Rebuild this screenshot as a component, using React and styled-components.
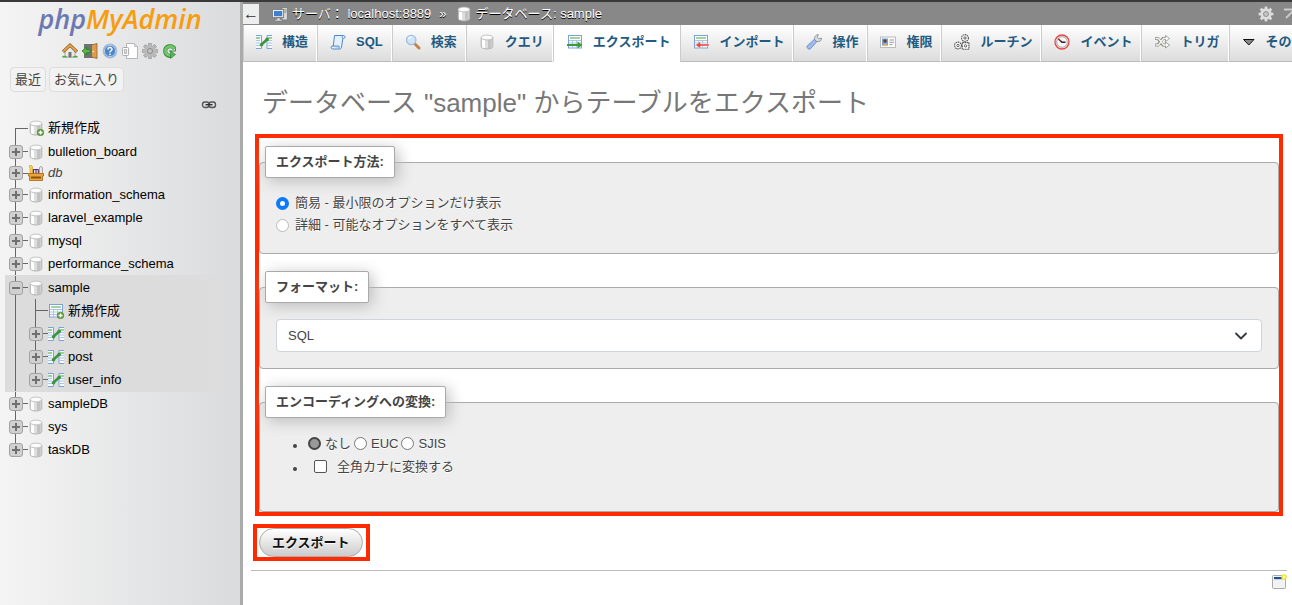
import React, { useState } from "react";
import styled, { createGlobalStyle, css } from "styled-components";

const GlobalStyle = createGlobalStyle`
  *, *::before, *::after { box-sizing: border-box; }
  body {
    margin: 0;
    background: #fff;
    color: #444;
    font: 13px/20px "Liberation Sans", Arial, "Noto Sans CJK JP", sans-serif;
  }
  button, select, input { font: inherit; color: inherit; margin: 0; }
  a { color: inherit; text-decoration: none; }
`;

/* ---------- icons ---------- */

const IconBox = styled.svg`
  display: block;
  flex: none;
  width: 16px;
  height: 16px;
`;

const Icon = ({ children }) => (
  <IconBox viewBox="0 0 16 16" aria-hidden="true">{children}</IconBox>
);

const Cylinder = () => (
  <>
    <path d="M2.200 3.500v9c0 1.500 2.600 2.500 5.800 2.500s5.800-1 5.800-2.500v-9z" fill="#dedede" stroke="#a6a6a6" strokeWidth=".8" />
    <path d="M3 5v8c.6.7 1.800 1.100 3 1.300V6z" fill="#fff" />
    <path d="M9 6.200v8.300c1.600-.1 2.800-.5 3.500-1V5.500z" fill="#c2c2c2" />
    <ellipse cx="8" cy="3.500" rx="5.800" ry="2.400" fill="#fcfcfc" stroke="#b5b5b5" strokeWidth=".8" />
  </>
);

const Plus = () => (
  <>
    <circle cx="12.500" cy="12.500" r="3.300" fill="#5fa03a" stroke="#3f7d22" strokeWidth=".5" />
    <path d="M12.500 10.500v4M10.500 12.500h4" stroke="#fff" strokeWidth="1.400" />
  </>
);

const Grid = () => (
  <>
    <rect x="1.500" y="1.500" width="13" height="12.500" fill="#fff" stroke="#7ba3d6" />
    <path d="M3 4h10" stroke="#7cc07a" strokeWidth="1.400" />
    <path d="M2 6.500h12M2 9h12M2 11.500h12M5.500 6v8M9.500 6v8" stroke="#a9c6ea" />
  </>
);

const DbIcon = () => <Icon><Cylinder /></Icon>;
const DbNewIcon = () => <Icon><Cylinder /><Plus /></Icon>;
const TableNewIcon = () => <Icon><Grid /><Plus /></Icon>;

const StructureIcon = () => (
  <Icon>
    <path d="M0 1.500h5.500v13H0M16 1.500h-5v13h5" fill="#f4f8fd" stroke="#7ba3d6" />
    <path d="M0 4h4M12 4h4" stroke="#7cc07a" strokeWidth="1.400" />
    <path d="M0 6.500h4M0 9h4M0 11.500h4M12 6.500h4M12 9h4M12 11.500h4" stroke="#a9c6ea" />
    <path d="M5.500 10.500L11 5.500" stroke="#3c9440" strokeWidth="2.600" />
    <circle cx="5.500" cy="10.700" r="1.800" fill="#3c9440" />
    <circle cx="11.200" cy="5.400" r="1.800" fill="#3c9440" />
  </Icon>
);

const BasketIcon = () => (
  <Icon>
    <path d="M1 1l2-1 1.500 1.500V9H2V3z" fill="#f3cf4a" stroke="#b98c1e" strokeWidth=".5" />
    <path d="M5 9V4h6v5" fill="#f4f0f8" />
    <path d="M5.500 9V4.500M8 9V4.500M10.300 9V4.500M5 4.500h5.500" stroke="#5b2a7a" strokeWidth="1.200" fill="none" />
    <path d="M11.500 9V2.500c0-1 3-1 3 0V9z" fill="#e8e8e8" stroke="#888" strokeWidth=".7" />
    <path d="M.5 8.500h15v2.500h-1v4.500h-13V11h-1z" fill="#e9a63b" stroke="#a9650f" strokeWidth=".8" />
    <path d="M3 11.500h10v2H3z" fill="#8b520e" />
  </Icon>
);

const HomeIcon = () => (
  <Icon>
    <path d="M3 8v6h10V8L8 3z" fill="#e9e9e9" stroke="#9a9a9a" strokeWidth=".8" />
    <path d="M6.500 9h3v5.500h-3z" fill="#777" />
    <path d="M1 8.800L8 2.200l7 6.600" fill="none" stroke="#8f5a1b" strokeWidth="3.200" />
    <path d="M1.200 8.500L8 2.200l6.800 6.300" fill="none" stroke="#e3a552" strokeWidth="1.800" />
    <path d="M0 14.500c0-2 4-2.500 5.500 0zM10.500 14.500c1-2.500 5.500-2 5.500 0z" fill="#4aa83c" />
  </Icon>
);

const ExitIcon = () => (
  <Icon>
    <path d="M2 1h9v14H2z" fill="#6f7373" />
    <path d="M9.500 2l5.500-1.500v15L9.500 14z" fill="#dc9c52" stroke="#98602a" strokeWidth=".8" />
    <circle cx="11.200" cy="8.500" r=".8" fill="#fff2c4" />
    <path d="M0 8l4.500-4v2.500H8v3.200H4.500V12z" fill="#57b947" stroke="#2c7d23" strokeWidth=".8" />
  </Icon>
);

const HelpIcon = () => (
  <Icon>
    <circle cx="8" cy="8" r="6.800" fill="#4f86c9" stroke="#a9bcd6" strokeWidth="1.200" />
    <circle cx="8" cy="8" r="5.600" fill="none" stroke="#dfeaf7" strokeWidth=".7" />
    <path d="M6 6.500c0-2.600 4-2.500 4-.3 0 1.500-2 1.500-2 3.200" fill="none" stroke="#fff" strokeWidth="1.400" />
    <circle cx="8" cy="11.300" r=".9" fill="#fff" />
  </Icon>
);

const DocsIcon = () => (
  <Icon>
    <path d="M4.500.5h8l3 3v12h-11z" fill="#fdfdfd" stroke="#b5b5b5" />
    <path d="M12.500.5v3h3" fill="#ddd" stroke="#b5b5b5" strokeWidth=".8" />
    <rect x=".6" y="4.500" width="6" height="8" rx="1" fill="#fff" stroke="#aaa" />
    <path d="M2.500 6.500h2.200v4H2.500z" fill="#ddd" stroke="#999" strokeWidth=".6" />
  </Icon>
);

const Gear = ({ fill, stroke }) => (
  <Icon>
    <g stroke={stroke} strokeWidth=".5" fill={fill}>
      {[0, 45, 90, 135].map((a) => (
        <rect key={a} x="6.400" y=".3" width="3.200" height="15.400" rx=".6" transform={`rotate(${a} 8 8)`} />
      ))}
    </g>
    <circle cx="8" cy="8" r="4.200" fill="none" stroke={fill} strokeWidth="3" />
    <circle cx="8" cy="8" r="2.500" fill="#c4c4c4" stroke={stroke} strokeWidth=".8" />
  </Icon>
);

const ReloadIcon = () => (
  <Icon>
    <path d="M12.500 5.800C10.500 1.800 3.200 2.500 3.200 8c0 4.200 4.300 5.500 6.300 4.500" fill="none" stroke="#2f8a37" strokeWidth="4" />
    <path d="M12.300 5.700C10.300 2.200 3.400 2.700 3.400 8c0 3.900 4 5 6 4.300" fill="none" stroke="#74c76c" strokeWidth="2.600" />
    <path d="M8.500 15.500V8l5 3.500z" fill="#5ab455" stroke="#2f8a37" strokeWidth=".7" />
    <path d="M7 8h6.500V5.500" fill="none" stroke="#2f8a37" strokeWidth="1" />
  </Icon>
);

const ChainIcon = () => (
  <Icon>
    <rect x="1.500" y="5" width="6.500" height="5.500" rx="2.500" fill="none" stroke="#555" strokeWidth="1.400" />
    <rect x="8" y="5" width="6.500" height="5.500" rx="2.500" fill="none" stroke="#555" strokeWidth="1.400" />
    <path d="M4.500 7.700h7" stroke="#333" strokeWidth="1.400" />
  </Icon>
);

const ServerIcon = () => (
  <Icon>
    <path d="M10 1.500h5.500V14H10z" fill="#d5d5d5" stroke="#777" strokeWidth=".8" />
    <path d="M11 4h3.500M11 6h3.500" stroke="#888" />
    <rect x=".6" y="3.600" width="11" height="8" fill="#eee" stroke="#777" strokeWidth=".8" />
    <rect x="2" y="5" width="8.200" height="5.200" fill="#3f7fd0" />
    <path d="M5 12h3v1.500h2V15H3v-1.500h2z" fill="#ddd" stroke="#777" strokeWidth=".5" />
  </Icon>
);

const CollapseIcon = () => (
  <Icon>
    <path d="M0 3.500h16M2 12l6-6 6 6" fill="none" stroke="#ccc" strokeWidth="1.800" />
  </Icon>
);

const SqlIcon = () => (
  <Icon>
    <path d="M4.500 1.500h9c2 0 2 3 0 3h-.6l-1.400 8.500c-.2 1.500-1 2-2 2H2.500C.6 15 .6 12 2.500 12h.8z" fill="#e3f0fd" stroke="#4f88c8" />
    <path d="M2.500 12h6.300c.6 1 .5 2-.2 2.800" fill="#b8d7f6" stroke="#4f88c8" strokeWidth=".9" />
    <path d="M12.900 4.500c-1-.4-1-2 .2-2.800" fill="none" stroke="#4f88c8" strokeWidth=".9" />
  </Icon>
);

const SearchIcon = () => (
  <Icon>
    <path d="M10 10l4 4" stroke="#c58447" strokeWidth="3" strokeLinecap="round" />
    <circle cx="6.200" cy="6" r="4.700" fill="#cfe5fb" stroke="#9dbde0" strokeWidth="1.300" />
    <path d="M3.500 5c.6-1.500 2-2 3.300-1.800" fill="none" stroke="#fff" strokeWidth="1.200" />
  </Icon>
);

const ExportIcon = () => (
  <Icon>
    <Grid />
    <path d="M0 10h10.500V7.500l5 3.500-5 3.500V12H0z" fill="#3c9b35" />
  </Icon>
);

const ImportIcon = () => (
  <Icon>
    <Grid />
    <path d="M16 10H7.500V7.500l-5 3.500 5 3.500V12H16z" fill="#f0453b" stroke="#fff" strokeWidth=".4" />
  </Icon>
);

const WrenchIcon = () => (
  <Icon>
    <path d="M8.500 5.500c-.4-2.800 1.400-4.900 4-4.900l-1.300 2.600 1.600 1.600 2.700-.8c.2 2.600-2 4.300-4.600 3.500z" fill="#dcdcdc" stroke="#888" strokeWidth=".8" />
    <path d="M8.300 5.400l2.400 2.400-6.300 7c-1.500 1.200-4.400-1-3.100-3z" fill="#9dbdf0" stroke="#5a80bd" strokeWidth=".8" />
  </Icon>
);

const CardIcon = () => (
  <Icon>
    <rect x=".5" y="3" width="15" height="10.500" fill="#fcfcfc" stroke="#bbb" />
    <rect x="2" y="4.500" width="6" height="7" fill="#6da4e4" />
    <circle cx="5" cy="7" r="1.700" fill="#6e3c1a" />
    <path d="M2.500 11.500c.5-3 4.500-3 5 0z" fill="#e9a256" />
    <path d="M9.500 6h4.500M9.500 8.300h4.500M9.500 10.600h3" stroke="#999" />
  </Icon>
);

const RoutinesIcon = () => (
  <Icon>
    <g fill="#fff" stroke="#555" strokeWidth="1.100" strokeDasharray="1.600 .6">
      <circle cx="11" cy="4" r="3.400" />
      <circle cx="4" cy="11.500" r="3.400" />
      <rect x="8.300" y="8.600" width="6.600" height="6.600" />
    </g>
    <g fill="none" stroke="#555" strokeWidth=".9">
      <circle cx="11" cy="4" r="1.200" />
      <circle cx="4" cy="11.500" r="1.200" />
      <circle cx="11.600" cy="11.900" r="1.200" />
    </g>
  </Icon>
);

const ClockIcon = () => (
  <Icon>
    <circle cx="8" cy="8" r="7" fill="#eee" stroke="#e64545" strokeWidth="1.300" />
    <circle cx="8" cy="8" r="5.300" fill="#f7f7f7" stroke="#999" strokeWidth=".8" />
    <path d="M4.500 5L8 8.200h3.500" fill="none" stroke="#222" strokeWidth="1.500" />
    <path d="M4 4.500l2.500 2.300" stroke="#e64545" />
  </Icon>
);

const ShuffleIcon = () => (
  <Icon>
    <g fill="none" stroke="#8c8c84" strokeWidth="3">
      <path d="M1 4.500h3l5 6.500h4M1 11h3l5-6.500h4" />
    </g>
    <path d="M11.500 1.500l4 3-4 3zM11.500 8l4 3-4 3z" fill="#fff" stroke="#8c8c84" strokeWidth=".8" />
    <g fill="none" stroke="#f4f4f0" strokeWidth="1.400">
      <path d="M1.500 4.500h3l5 6.500h3M1.500 11h3l5-6.500h3" />
    </g>
  </Icon>
);

const MoreIcon = () => (
  <Icon><path d="M1.500 5.500h10.500l-5.200 5.500z" fill="#888" stroke="#111" /></Icon>
);

const WindowIcon = () => (
  <Icon>
    <rect x="1.500" y="1.500" width="13" height="13" rx="1" fill="#f2f2f2" stroke="#aaa" />
    <path d="M3 3h9v2.200H3z" fill="#1f4f94" />
    <circle cx="13" cy="3" r="2.800" fill="#f4e928" />
    <circle cx="13" cy="3" r="1.200" fill="#fffbd0" />
  </Icon>
);

/* ---------- page frame ---------- */

const Page = styled.div`
  display: flex;
  min-height: 100vh;
  border-top: 2px solid #3a3839;
  overflow: hidden;
`;

const Sidebar = styled.aside`
  flex: none;
  width: 243px;
  border-right: 3px solid #aaa;
  background: linear-gradient(to right, #f4f4f4, #dadbdd);
`;

const Main = styled.main`
  flex: 1;
  min-width: 0;
`;

/* ---------- sidebar ---------- */

const Logo = styled.a`
  display: block;
  text-align: center;
  font: italic 600 27px/34px "Open Sans", "Noto Sans", sans-serif;
  color: #f89c0e;
`;

const LogoPrefix = styled.span`
  color: #6c78af;
`;

const Shortcuts = styled.nav`
  display: flex;
  justify-content: center;
  gap: 4px;
  padding-top: 7px;
`;

const QuickLists = styled.div`
  display: flex;
  gap: 3px;
  padding: 8px 10px 5px;
`;

const QuickButton = styled.button`
  height: 25px;
  padding: 0 4px;
  border: 1px solid #ddd;
  border-radius: 4px;
  background: #f2f2f2;
`;

const LinkRow = styled.div`
  display: flex;
  justify-content: flex-end;
  padding-right: 23px;
`;

const Tree = styled.ul`
  list-style: none;
  margin: 0;
  padding: 3px 0 0 5px;
  color: #000;
`;

const SubTree = styled.ul`
  list-style: none;
  margin: 0;
  padding: 0 0 0 20px;
  background: linear-gradient(#666, #666) 10px 0 / 1px 100% no-repeat;
`;

const Branch = styled.li`
  ${(p) => p.$open && css`
    padding: 1px 0;
    background: linear-gradient(to right, #dcdcdc 80%, rgba(220, 220, 220, 0));
  `}
`;

const TreeRow = styled.div`
  display: flex;
  align-items: center;
  height: ${(p) => p.$height || 23}px;
`;

const guide = {
  first: "10px 100% / 1px 50%",
  middle: "10px 0 / 1px 100%",
  last: "10px 0 / 1px 50%",
};

const Guide = styled.span`
  flex: none;
  display: flex;
  align-items: center;
  align-self: stretch;
  width: 23px;
  padding-left: 4px;
  background:
    linear-gradient(#666, #666) ${(p) => guide[p.$at]} no-repeat,
    linear-gradient(#666, #666) 10px 50% / 15px 1px no-repeat;
`;

const Toggle = styled.button`
  display: block;
  width: 14px;
  height: 14px;
  padding: 0;
  border: 1px solid #a2a2a2;
  border-radius: 3px;
  background:
    linear-gradient(#707070, #707070) center / 8px 2px no-repeat,
    ${(p) => !p.$open && "linear-gradient(#707070, #707070) center / 2px 8px no-repeat,"}
    #d0d0d0;
`;

const TreeLink = styled.a`
  padding-left: 4px;
  white-space: nowrap;
  ${(p) => p.$group && css`
    font-style: italic;
    color: #444;
  `}
`;

const Node = ({ label, icon, at = "middle", leaf, open, group, height }) => (
  <TreeRow $height={height}>
    <Guide $at={at}>
      {!leaf && <Toggle type="button" $open={open} aria-label={label} aria-expanded={!!open} />}
    </Guide>
    {icon}
    <TreeLink href="#" $group={group}>{label}</TreeLink>
  </TreeRow>
);

/* ---------- top bars ---------- */

const Breadcrumb = styled.header`
  display: flex;
  align-items: center;
  height: 23px;
  overflow: hidden;
  background: #888;
  color: #fff;
  text-shadow: 0 1px 0 #000;
  white-space: nowrap;
`;

const BackButton = styled.button`
  flex: none;
  width: 16px;
  height: 20px;
  margin-right: 13px;
  padding: 0;
  border: 0;
  background: #eee;
  color: #333;
  font-size: 16px;
  line-height: 20px;
`;

const Crumb = styled.a`
  display: flex;
  align-items: center;
  gap: 4px;
`;

const CrumbSeparator = styled.span`
  padding: 0 9px 0 8px;
`;

const BarTools = styled.div`
  display: flex;
  gap: 10px;
  margin-left: auto;
  margin-right: -8px;
`;

const Tabs = styled.nav`
  display: flex;
  overflow: hidden;
`;

const Tab = styled.a`
  flex: none;
  display: flex;
  align-items: center;
  gap: 10px;
  height: 37px;
  padding: 0 8px 2px 12px;
  border: solid;
  border-width: 0 1px 1px;
  border-color: #fff #fff #bbb #ccc;
  background: linear-gradient(#fff, #dcdcdc);
  color: #235a81;
  font-weight: bold;
  white-space: nowrap;
  &:last-child { gap: 8px; }
  ${(p) => p.$active && css`
    padding: 0 9px 2px 13px;
    border-bottom-color: #fff;
    background: #fff;
  `}
`;

const tabs = [
  ["構造", StructureIcon],
  ["SQL", SqlIcon],
  ["検索", SearchIcon],
  ["クエリ", DbIcon],
  ["エクスポート", ExportIcon, true],
  ["インポート", ImportIcon],
  ["操作", WrenchIcon],
  ["権限", CardIcon],
  ["ルーチン", RoutinesIcon],
  ["イベント", ClockIcon],
  ["トリガ", ShuffleIcon],
  ["その他", MoreIcon],
];

/* ---------- export form ---------- */

const Title = styled.h1`
  margin: 0;
  padding: 22px 19px 12px;
  color: #777;
  font-size: 26px;
  font-weight: normal;
  line-height: 38px;
`;

const Form = styled.form`
  padding: 0 9px 0 10px;
`;

const Highlight = styled.div`
  margin-left: 2px;
  padding-top: 8px;
  border: 4px solid #ff2a00;
`;

const Group = styled.fieldset`
  min-width: 0;
  margin: 0 0 17px;
  padding: 0 5px;
  border: 1px solid #aaa;
  border-radius: 4px;
  background: #eee;
  text-shadow: 0 1px 0 #fff;
  &:last-child { margin-bottom: 0; }
`;

const Legend = styled.legend`
  padding: 5px 10px;
  border: 1px solid #aaa;
  border-radius: 2px;
  background: #fff;
  box-shadow: 3px 3px 15px #bbb;
  font-weight: bold;
`;

const Options = styled.div`
  padding: 14px 11px 17px;
`;

const OptionLabel = styled.label`
  display: flex;
  align-items: center;
  gap: 6px;
  height: 22px;
`;

const Radio = styled.input.attrs({ type: "radio" })`
  appearance: none;
  flex: none;
  width: 13px;
  height: 13px;
  border: 1px solid ${(p) => (p.$plain ? "#777" : "#bbb")};
  border-radius: 50%;
  background: #fff;
  &:checked {
    border: ${(p) => (p.$plain ? "2px solid #444" : "4px solid #0a7aff")};
    background: ${(p) => (p.$plain ? "#999" : "#fff")};
  }
`;

const Checkbox = styled.input.attrs({ type: "checkbox" })`
  appearance: none;
  flex: none;
  width: 13px;
  height: 13px;
  border: 1px solid #555;
  border-radius: 2px;
  background: #fff;
  &:checked { background: #0a7aff; }
`;

const SelectWrap = styled.div`
  padding: 16px 11px;
`;

const Select = styled.select`
  appearance: none;
  display: block;
  width: 100%;
  height: 33px;
  padding: 0 11px;
  border: 1px solid #ced4da;
  border-radius: 4px;
  background: #fff;
`;

const SelectFrame = styled.div`
  display: grid;
  align-items: center;
  & > * { grid-area: 1 / 1; }
  & > svg {
    justify-self: end;
    margin-right: 13px;
    pointer-events: none;
  }
`;

const EncodingList = styled.ul`
  margin: 0;
  padding: 14px 0 33px 43px;
`;

const EncodingItem = styled.li`
  height: 23px;
  line-height: 23px;
`;

const InlineOptions = styled.div`
  display: flex;
  gap: 3px;
`;

const InlineLabel = styled.label`
  display: flex;
  align-items: center;
  gap: ${(p) => (p.$wide ? 10 : 4)}px;
  padding-left: ${(p) => (p.$wide ? 6 : 0)}px;
`;

const SubmitHighlight = styled.div`
  width: fit-content;
  margin-top: 8px;
  padding: 0 3px 0 2px;
  border: 4px solid #ff2a00;
`;

const Submit = styled.button`
  display: block;
  height: 29px;
  padding: 0 12px;
  border: 1px solid #aaa;
  border-radius: 15px;
  background: linear-gradient(#fff, #ccc);
  color: #111;
  font-weight: bold;
  text-shadow: 0 1px 0 #fff;
`;

const Footer = styled.footer`
  display: flex;
  justify-content: flex-end;
  margin: 9px 5px 0 8px;
  padding-top: 3px;
  border-top: 1px solid #bbb;
`;

export default function App() {
  const [method, setMethod] = useState("quick");
  const [encoding, setEncoding] = useState("なし");
  return (
    <>
      <GlobalStyle />
      <Page>
        <Sidebar>
          <Logo href="#"><LogoPrefix>php</LogoPrefix>MyAdmin</Logo>
          <Shortcuts>
            <a href="#" aria-label="ホーム"><HomeIcon /></a>
            <a href="#" aria-label="ログアウト"><ExitIcon /></a>
            <a href="#" aria-label="ヘルプ"><HelpIcon /></a>
            <a href="#" aria-label="ドキュメント"><DocsIcon /></a>
            <a href="#" aria-label="設定"><Gear fill="#b9b9b9" stroke="#808080" /></a>
            <a href="#" aria-label="再読込"><ReloadIcon /></a>
          </Shortcuts>
          <QuickLists>
            <QuickButton type="button">最近</QuickButton>
            <QuickButton type="button">お気に入り</QuickButton>
          </QuickLists>
          <LinkRow><a href="#" aria-label="リンク"><ChainIcon /></a></LinkRow>
          <Tree>
            <Branch><Node label="新規作成" icon={<DbNewIcon />} at="first" leaf height={24} /></Branch>
            <Branch><Node label="bulletion_board" icon={<DbIcon />} /></Branch>
            <Branch><Node label="db" icon={<BasketIcon />} group height={20} /></Branch>
            {["information_schema", "laravel_example", "mysql", "performance_schema"].map((name) => (
              <Branch key={name}><Node label={name} icon={<DbIcon />} /></Branch>
            ))}
            <Branch $open>
              <Node label="sample" icon={<DbIcon />} open />
              <SubTree>
                <li><Node label="新規作成" icon={<TableNewIcon />} leaf /></li>
                <li><Node label="comment" icon={<StructureIcon />} /></li>
                <li><Node label="post" icon={<StructureIcon />} /></li>
                <li><Node label="user_info" icon={<StructureIcon />} at="last" /></li>
              </SubTree>
            </Branch>
            <Branch><Node label="sampleDB" icon={<DbIcon />} /></Branch>
            <Branch><Node label="sys" icon={<DbIcon />} /></Branch>
            <Branch><Node label="taskDB" icon={<DbIcon />} at="last" /></Branch>
          </Tree>
        </Sidebar>

        <Main>
          <Breadcrumb>
            <BackButton type="button">←</BackButton>
            <Crumb href="#"><ServerIcon />サーバ： localhost:8889</Crumb>
            <CrumbSeparator>»</CrumbSeparator>
            <Crumb href="#"><DbIcon />データベース: sample</Crumb>
            <BarTools>
              <a href="#" aria-label="ページ設定"><Gear fill="#ddd" stroke="#888" /></a>
              <a href="#" aria-label="折りたたむ"><CollapseIcon /></a>
            </BarTools>
          </Breadcrumb>
          <Tabs>
            {tabs.map(([label, TabIcon, active]) => (
              <Tab key={label} href="#" $active={active}><TabIcon />{label}</Tab>
            ))}
          </Tabs>
          <Title>データベース "sample" からテーブルをエクスポート</Title>
          <Form onSubmit={(e) => e.preventDefault()}>
            <Highlight>
              <Group>
                <Legend>エクスポート方法:</Legend>
                <Options>
                  <OptionLabel>
                    <Radio name="method" checked={method === "quick"} onChange={() => setMethod("quick")} />
                    簡易 - 最小限のオプションだけ表示
                  </OptionLabel>
                  <OptionLabel>
                    <Radio name="method" checked={method === "custom"} onChange={() => setMethod("custom")} />
                    詳細 - 可能なオプションをすべて表示
                  </OptionLabel>
                </Options>
              </Group>
              <Group>
                <Legend>フォーマット:</Legend>
                <SelectWrap>
                  <SelectFrame>
                    <Select aria-label="フォーマット" defaultValue="SQL"><option>SQL</option></Select>
                    <Icon><path d="M3 5.500l5 5 5-5" fill="none" stroke="#343a40" strokeWidth="1.800" strokeLinecap="round" strokeLinejoin="round" /></Icon>
                  </SelectFrame>
                </SelectWrap>
              </Group>
              <Group>
                <Legend>エンコーディングへの変換:</Legend>
                <EncodingList>
                  <EncodingItem>
                    <InlineOptions>
                      {["なし", "EUC", "SJIS"].map((name) => (
                        <InlineLabel key={name}>
                          <Radio $plain name="encoding" checked={encoding === name} onChange={() => setEncoding(name)} />
                          {name}
                        </InlineLabel>
                      ))}
                    </InlineOptions>
                  </EncodingItem>
                  <EncodingItem>
                    <InlineLabel $wide><Checkbox />全角カナに変換する</InlineLabel>
                  </EncodingItem>
                </EncodingList>
              </Group>
            </Highlight>
            <SubmitHighlight><Submit type="submit">エクスポート</Submit></SubmitHighlight>
          </Form>
          <Footer><a href="#" aria-label="新しいウィンドウ"><WindowIcon /></a></Footer>
        </Main>
      </Page>
    </>
  );
}
